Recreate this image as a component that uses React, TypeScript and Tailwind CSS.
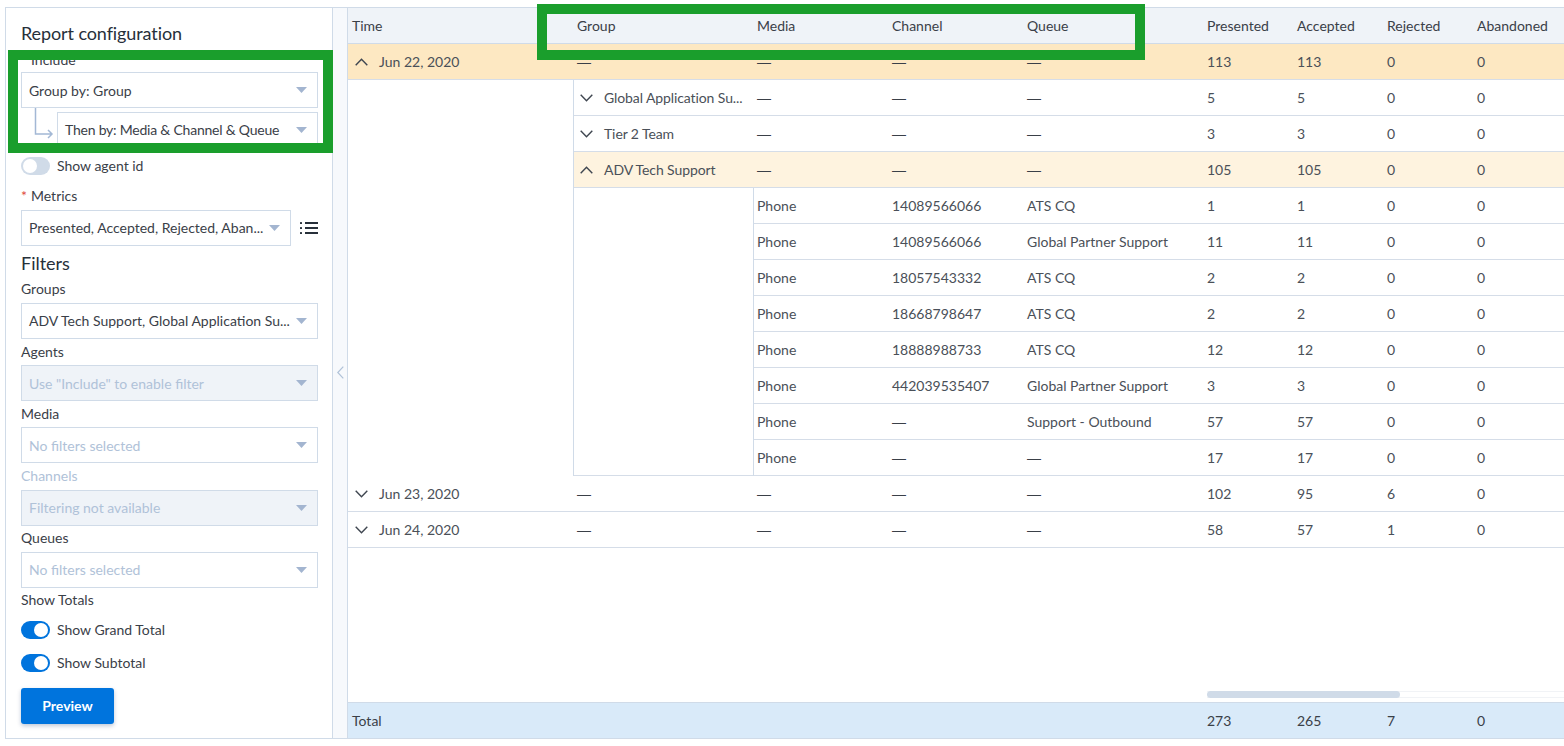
const font = "font-['Lato','Noto_Sans',sans-serif]"

const metricRows = [
  ["14089566066", "ATS CQ", "1", "1", "0", "0"],
  ["14089566066", "Global Partner Support", "11", "11", "0", "0"],
  ["18057543332", "ATS CQ", "2", "2", "0", "0"],
  ["18668798647", "ATS CQ", "2", "2", "0", "0"],
  ["18888988733", "ATS CQ", "12", "12", "0", "0"],
  ["442039535407", "Global Partner Support", "3", "3", "0", "0"],
  ["—", "Support - Outbound", "57", "57", "0", "0"],
  ["—", "—", "17", "17", "0", "0"],
]

function Chevron({ up }: { up?: boolean }) {
  return (
    <svg width="13" height="8" viewBox="0 0 13 8" fill="none" stroke="#3f4650" strokeWidth="1.4" className="shrink-0">
      <path d={up ? "M0.7 7.3 L6.5 1.2 L12.3 7.3" : "M0.7 0.7 L6.5 6.8 L12.3 0.7"} />
    </svg>
  )
}

function Arrow() {
  return (
    <svg width="11" height="6" viewBox="0 0 11 6" className="shrink-0">
      <path d="M0 0 H11 L5.5 6 Z" fill="#a3b5d0" />
    </svg>
  )
}

function Select({ text, disabled, muted, className = "", textClass = "" }: { text: string, disabled?: boolean, muted?: boolean, className?: string, textClass?: string }) {
  return (
    <div className={`flex h-9 items-center justify-between border border-[#d0dbe8] pl-[7px] pr-[10px] ${disabled ? "bg-[#eff3f8]" : "bg-white"} ${className}`}>
      <span className={`whitespace-nowrap text-sm ${disabled || muted ? "text-[#b0c2d8]" : "text-[#3a4048]"} ${textClass}`}>{text}</span>
      <Arrow />
    </div>
  )
}

function Toggle({ on, label, className = "" }: { on?: boolean, label: string, className?: string }) {
  return (
    <div className={`flex items-center gap-[7px] ${className}`}>
      <div className={`flex h-[18px] w-[29px] items-center rounded-full px-[2px] ${on ? "justify-end bg-[#0074dd]" : "justify-start bg-[#d0dbe8]"}`}>
        <div className="h-[14px] w-[14px] rounded-full bg-white" />
      </div>
      <span className="text-sm text-[#3a4048]">{label}</span>
    </div>
  )
}

function Label({ text, muted, className = "" }: { text: string, muted?: boolean, className?: string }) {
  return <div className={`h-5 text-sm leading-5 ${muted ? "text-[#b0c2d8]" : "text-[#3a4048]"} ${className}`}>{text}</div>
}

// the dash in Lato is too short, Liberation Sans has the full em width
function Value({ text }: { text: string }) {
  return text === "—" ? <span className="font-['Liberation_Sans',sans-serif] text-[#3a4048]">—</span> : <>{text}</>
}

function Tail({ values, nested }: { values: string[], nested?: boolean }) {
  return (
    <>
      <div className={`${nested ? "w-[134px] pl-[3px]" : "w-[135px] pl-1"} shrink-0`}><Value text={values[0]} /></div>
      <div className="w-[135px] shrink-0 pl-1"><Value text={values[1]} /></div>
      <div className="w-[180px] shrink-0 whitespace-nowrap pl-1"><Value text={values[2]} /></div>
      <div className="w-[90px] shrink-0 pl-1">{values[3]}</div>
      <div className="w-[90px] shrink-0 pl-1">{values[4]}</div>
      <div className="w-[90px] shrink-0 pl-1">{values[5]}</div>
      <div className="w-[87px] shrink-0 whitespace-nowrap pl-1">{values[6]}</div>
    </>
  )
}

function GroupRow({ name, open, values }: { name: string, open?: boolean, values: string[] }) {
  return (
    <div className={`flex h-9 items-center border-b border-[#d5dde8] text-sm text-[#4a5058] ${open ? "bg-[#fef3df]" : ""}`}>
      <div className="flex w-[179px] shrink-0 items-center gap-[11px] pl-[6px]">
        <Chevron up={open} />
        <span className="whitespace-nowrap tracking-[-0.1px]">{name}</span>
      </div>
      <Tail values={values} />
    </div>
  )
}

function DateRow({ date, open, values }: { date: string, open?: boolean, values: string[] }) {
  return (
    <div className={`flex h-9 items-center border-b border-[#d5dde8] text-sm text-[#4a5058] ${open ? "bg-[#fde8c2]" : ""}`}>
      <div className="flex w-[225px] shrink-0 items-center gap-[11px] pl-[7px]">
        <Chevron up={open} />
        <span>{date}</span>
      </div>
      <div className="w-[180px] shrink-0 pl-1"><Value text="—" /></div>
      <Tail values={values} />
    </div>
  )
}

const dash = ["—", "—", "—"]

export default function App() {
  return (
    <div className={`relative h-[746px] w-full overflow-hidden bg-white pb-[7px] pl-[5px] pt-[7px] ${font}`}>
      <div className="flex h-full border-y border-l border-[#d0dbe8]">
        <aside className="flex w-[327px] shrink-0 flex-col border-r border-[#d0dbe8] pl-[15px] pr-[14px]">
          <h1 className="mt-[13px] h-6 text-lg leading-6 tracking-[-0.1px] text-[#27303a]">Report configuration</h1>
          <Label text="Include" className="ml-[10px] mt-[5px]" />
          <Select text="Group by: Group" className="mt-[2px]" textClass="pt-px" />
          <div className="mt-1 flex">
            <svg width="36" height="36" viewBox="0 0 36 36" fill="none" stroke="#a3b8d5" strokeWidth="1.5" className="shrink-0 overflow-visible">
              <path d="M14.5 -4 V22 H31 M27 18 L31 22 L27 26" />
            </svg>
            <Select text="Then by: Media & Channel & Queue" className="flex-1" textClass="tracking-[-0.22px]" />
          </div>
          <Toggle label="Show agent id" className="mt-[8px]" />
          <div className="mt-[10px] flex h-5 text-sm leading-5 text-[#3a4048]"><span className="w-[10px] text-[#e0483e]">*</span>Metrics</div>
          <div className="mt-1 flex items-center">
            <Select text="Presented, Accepted, Rejected, Aban..." className="w-[270px]" />
            <svg width="18" height="14" viewBox="0 0 18 14" className="ml-[9px]" fill="#27303a">
              <rect x="0" y="1" width="2" height="2" rx="0.6" />
              <rect x="0" y="6" width="2" height="2" rx="0.6" />
              <rect x="0" y="11" width="2" height="2" rx="0.6" />
              <rect x="5" y="1" width="13" height="2" />
              <rect x="5" y="6" width="13" height="2" />
              <rect x="5" y="11" width="13" height="2" />
            </svg>
          </div>
          <h2 className="mt-[5px] h-6 text-lg leading-6 text-[#27303a]">Filters</h2>
          <Label text="Groups" className="mt-[4px]" />
          <Select text="ADV Tech Support, Global Application Su..." className="mt-1" />
          <Label text="Agents" className="mt-[3px]" />
          <Select text={'Use "Include" to enable filter'} disabled className="mt-[3px]" textClass="pt-px" />
          <Label text="Media" className="mt-[3px]" />
          <Select text="No filters selected" muted className="mt-[3px]" textClass="pt-px" />
          <Label text="Channels" muted className="mt-[3px]" />
          <Select text="Filtering not available" disabled className="mt-1" />
          <Label text="Queues" className="mt-[2px]" />
          <Select text="No filters selected" muted className="mt-1" />
          <Label text="Show Totals" className="mt-[2px]" />
          <Toggle on label="Show Grand Total" className="mt-[10px]" />
          <Toggle on label="Show Subtotal" className="mt-[13px]" />
          <button className="mt-[15px] h-9 w-[93px] rounded-[3px] bg-[#0074dd] pb-px text-sm font-bold text-white shadow-[0_2px_4px_rgba(0,40,100,0.25)]">Preview</button>
        </aside>

        <div className="flex w-[15px] shrink-0 items-center justify-center border-r border-[#d0dbe8] bg-[#f7f9fc]">
          <svg width="7" height="13" viewBox="0 0 7 13" fill="none" stroke="#b0c2d8" strokeWidth="1.2" className="mb-[2px]">
            <path d="M6.3 0.7 L0.8 6.5 L6.3 12.3" />
          </svg>
        </div>

        <main className="relative flex min-w-0 flex-1 flex-col overflow-hidden">
          <div className="flex h-9 shrink-0 items-center border-b border-[#d0dbe8] bg-[#eff3f8] pt-px text-sm text-[#3a4048]">
            <div className="w-[225px] shrink-0 pl-1">Time</div>
            <div className="w-[180px] shrink-0 pl-1">Group</div>
            <Tail values={["Media", "Channel", "Queue", "Presented", "Accepted", "Rejected", "Abandoned"]} />
          </div>

          <div className="min-h-0 flex-1">
            <DateRow date="Jun 22, 2020" open values={[...dash, "113", "113", "0", "0"]} />
            <div className="flex">
              <div className="w-[225px] shrink-0" />
              <div className="min-w-0 flex-1 border-l border-[#d0dbe8]">
                <GroupRow name="Global Application Su..." values={[...dash, "5", "5", "0", "0"]} />
                <GroupRow name="Tier 2 Team" values={[...dash, "3", "3", "0", "0"]} />
                <GroupRow name="ADV Tech Support" open values={[...dash, "105", "105", "0", "0"]} />
                <div className="flex">
                  <div className="w-[179px] shrink-0 border-b border-[#d5dde8]" />
                  <div className="min-w-0 flex-1 border-l border-[#d0dbe8]">
                    {metricRows.map((r, i) => (
                      <div key={i} className="flex h-9 items-center border-b border-[#d5dde8] text-sm text-[#4a5058]">
                        <Tail nested values={["Phone", ...r]} />
                      </div>
                    ))}
                  </div>
                </div>
              </div>
            </div>
            <DateRow date="Jun 23, 2020" values={[...dash, "102", "95", "6", "0"]} />
            <DateRow date="Jun 24, 2020" values={[...dash, "58", "57", "1", "0"]} />
          </div>

          <div className="absolute bottom-[40px] left-[859px] right-0 h-[7px] border-y border-[#f1f3f6]">
            <div className="-mt-px h-[7px] w-[193px] rounded-full bg-[#d0dbe8]" />
          </div>

          <div className="flex h-9 shrink-0 items-center border-t border-[#d0dbe8] bg-[#d9eaf9] pt-px text-sm text-[#3a4048]">
            <div className="w-[405px] shrink-0 pl-1">Total</div>
            <Tail values={["", "", "", "273", "265", "7", "0"]} />
          </div>
        </main>
      </div>

      {/* green annotation boxes */}
      <div className="absolute left-[8px] top-[50px] h-[103px] w-[325px] border-[10px] border-[#1a9e2c]" />
      <div className="absolute left-[537px] top-[4px] h-[56px] w-[608px] border-[10px] border-[#1a9e2c]" />
    </div>
  )
}
